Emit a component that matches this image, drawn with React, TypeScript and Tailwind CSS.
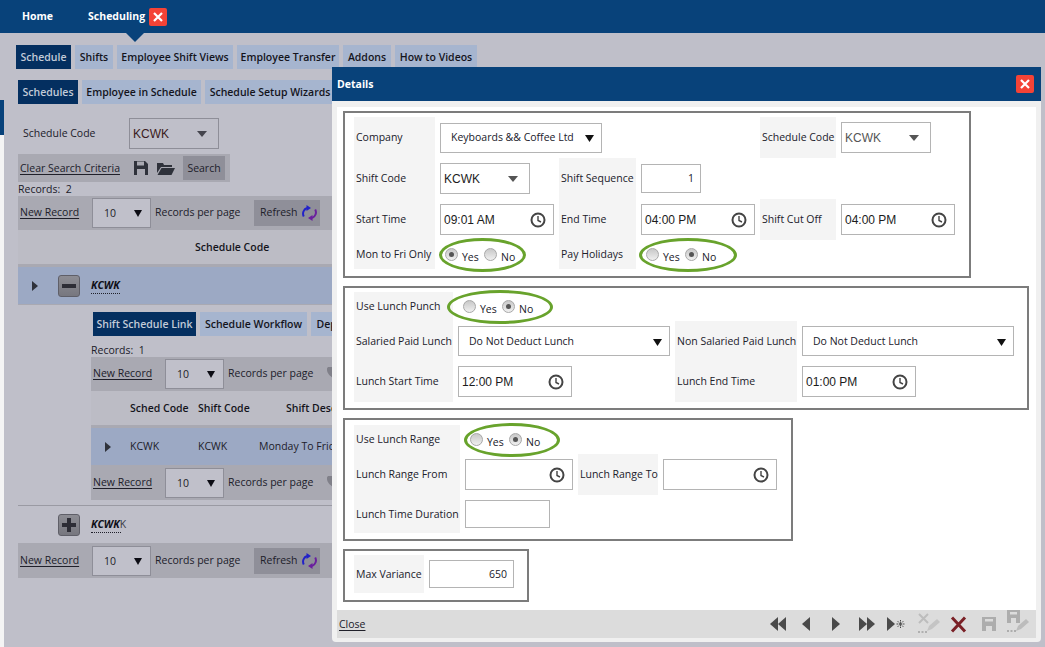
import type { ReactNode } from "react";

const labelFont = "font-['Open_Sans',sans-serif]";
const valueFont = "font-['Liberation_Sans',sans-serif]";

function Tab({ label, active, w }: { label: string; active?: boolean; w: string }) {
  return (
    <div
      className={`${w} h-6 shrink-0 flex items-center justify-center pt-[1px] whitespace-nowrap text-[10.5px] font-semibold ${
        active ? "bg-[#042f60] text-[#c3cbd8]" : "bg-[#a6b5cf] text-[#14141c]"
      }`}
    >
      {label}
    </div>
  );
}

function PageSelect({ value }: { value: string }) {
  return (
    <div className="w-[59px] h-[30px] shrink-0 bg-[#c0c0ca] border border-[#8e8e98] flex items-center justify-between pl-[11px] pr-[8px] text-[10.5px] text-[#1c1c26]">
      <span className="mt-[1px]">{value}</span>
      <svg width="8" height="8" viewBox="0 0 8 8">
        <path d="M0 1h8L4 8z" fill="#0c0c14" />
      </svg>
    </div>
  );
}

function RefreshIcon() {
  return (
    <svg className="shrink-0" width="15" height="16" viewBox="0 0 15 16" fill="none">
      <path d="M1.800 11.500A6 6 0 0 1 5 3" stroke="#2222c8" strokeWidth="2" />
      <path d="M4.500 0 9 3 4.500 6z" fill="#2222c8" />
      <path d="M13.200 4.500A6 6 0 0 1 10 13" stroke="#6a1f9e" strokeWidth="2" />
      <path d="M10.500 16 6 13 10.500 10z" fill="#6a1f9e" />
    </svg>
  );
}

function RecordBar({ refresh, className }: { refresh?: boolean; className: string }) {
  return (
    <div className={`h-[34px] bg-[#a9a9b2] flex items-center text-[10.5px] text-[#20202a] ${className}`}>
      <span className="ml-[2px] -mt-[1px] underline underline-offset-2 w-[59px] whitespace-nowrap">New Record</span>
      <span className="w-[13px]" />
      <PageSelect value="10" />
      <span className="ml-[4px] -mt-[1px] w-[84px] whitespace-nowrap">Records per page</span>
      {refresh ? (
        <div className="ml-[15px] w-[66px] h-[26px] shrink-0 bg-[#8f8f99] flex items-center pl-[6px] gap-[4px]">
          <span>Refresh</span>
          <RefreshIcon />
        </div>
      ) : (
        <svg className="ml-[15px] -mt-[2px]" width="12" height="12" viewBox="0 0 12 12">
          <path d="M0 3a3 3 0 0 1 6-1 3 3 0 0 1 6 1c0 3-3 6-6 8-3-2-6-5-6-8z" fill="#808089" />
        </svg>
      )}
    </div>
  );
}

function ExpandButton({ plus }: { plus?: boolean }) {
  return (
    <div className="w-[22px] h-[22px] shrink-0 rounded-[3px] border border-[#5f5f68] bg-gradient-to-b from-[#8d8d94] to-[#77777f] flex items-center justify-center">
      <svg width="14" height="14" viewBox="0 0 14 14">
        {plus && <rect x="5" y="0" width="4" height="14" fill="#2d2d36" />}
        <rect x="0" y="5" width="14" height="4" fill="#2d2d36" />
      </svg>
    </div>
  );
}

function Background() {
  return (
    <div className={`${labelFont} flex flex-col h-[647px]`}>
      <div className="h-[33px] shrink-0 bg-[#08427a] flex items-center text-white text-[10.5px] font-bold relative">
        <span className="ml-[22px]">Home</span>
        <span className="ml-[35px] w-[55px] whitespace-nowrap">Scheduling</span>
        <CloseButton className="ml-[6px]" />
        <span className="absolute left-[126px] top-[33px] border-x-[9px] border-x-transparent border-t-[9px] border-t-[#08427a]" />
      </div>
      <div className="flex flex-1 min-h-0">
        <div className="w-[4px] shrink-0 flex flex-col bg-[#f4f4f4]">
          <div className="h-[67px] bg-[#bfbfc9]" />
          <div className="h-[35px] bg-[#08427a]" />
        </div>
        <div className="flex-1 min-w-0 bg-[#bfbfc9] flex flex-col pr-[20px]">
          <div className="flex gap-[4px] mt-[12px] ml-[12px]">
            <Tab label="Schedule" active w="w-[55px]" />
            <Tab label="Shifts" w="w-[38px]" />
            <Tab label="Employee Shift Views" w="w-[116px]" />
            <Tab label="Employee Transfer" w="w-[102px]" />
            <Tab label="Addons" w="w-[48px]" />
            <Tab label="How to Videos" w="w-[82px]" />
          </div>
          <div className="flex gap-[4px] mt-[11px] ml-[14px]">
            <Tab label="Schedules" active w="w-[60px]" />
            <Tab label="Employee in Schedule" w="w-[119px]" />
            <Tab label="Schedule Setup Wizards" w="w-[130px]" />
          </div>
          <div className="flex items-center h-[31px] mt-[14px] text-[10.5px] text-[#20202a]">
            <span className="ml-[19px] w-[106px]">Schedule Code</span>
            <div className={`${valueFont} w-[90px] h-[31px] border border-[#8e8e98] flex items-center justify-between pl-[3px] pr-[11px] text-[12px] text-[#3a1a20]`}>
              KCWK
              <svg width="10" height="6" viewBox="0 0 10 6">
                <path d="M0 0h10L5 6z" fill="#45454e" />
              </svg>
            </div>
          </div>
          <div className="w-[212px] h-[28px] mt-[5px] ml-[14px] bg-[#a9a9b2] flex items-center text-[10.5px] text-[#20202a]">
            <span className="ml-[2px] mt-[1px] w-[99px] underline underline-offset-2 whitespace-nowrap">Clear Search Criteria</span>
            <svg className="ml-[15px]" width="14" height="14" viewBox="0 0 14 14">
              <path d="M0 0h11l3 3v11H0z" fill="#2f323b" />
              <rect x="3" y="0.5" width="7" height="4" fill="#a9a9b2" />
              <rect x="3" y="8" width="8" height="6" fill="#a9a9b2" />
            </svg>
            <svg className="ml-[9px]" width="18" height="13" viewBox="0 0 18 13">
              <path d="M0 1h6l1 2h8v2H4L0 11z" fill="#2f323b" />
              <path d="M4.500 6H18l-3.500 7H0.500z" fill="#2f323b" />
            </svg>
            <div className="ml-[8px] w-[42px] h-[24px] pt-[1px] bg-[#8f8f99] flex items-center justify-center">Search</div>
          </div>
          <div className="h-[14px] ml-[14px] text-[10.5px] leading-[14px] text-[#20202a]">Records:&nbsp; 2</div>
          <RecordBar refresh className="ml-[14px] mr-0" />
          <div className="h-[37px] ml-[14px] pt-[1px] bg-[#bcbcc5] border-b-[3px] border-[#a9a9b2] flex items-center text-[10.5px] font-semibold text-[#14141c]">
            <span className="ml-[177px]">Schedule Code</span>
          </div>
          <div className="h-[38px] ml-[14px] bg-[#9ca9c4] border-b border-[#a9a9b2] flex items-center">
            <svg className="ml-[14px]" width="6" height="10" viewBox="0 0 6 10">
              <path d="M0 0l6 5-6 5z" fill="#2f323b" />
            </svg>
            <span className="w-[20px]" />
            <ExpandButton />
            <span className="ml-[11px] mt-[1px] text-[10.5px] font-bold italic text-[#101018] border-b border-dotted border-[#20202a]">KCWK</span>
          </div>
          <div className="flex gap-[4px] mt-[7px] ml-[89px]">
            <Tab label="Shift Schedule Link" active w="w-[103px]" />
            <Tab label="Schedule Workflow" w="w-[107px]" />
            <Tab label="Departments" w="w-[78px]" />
          </div>
          <div className="h-[14px] mt-[7px] ml-[87px] text-[10.5px] leading-[14px] text-[#20202a]">Records:&nbsp; 1</div>
          <RecordBar className="ml-[87px]" />
          <div className="h-[37px] ml-[87px] pt-[1px] bg-[#bcbcc5] border-b-[3px] border-[#a9a9b2] flex items-center text-[10.5px] font-semibold text-[#14141c] whitespace-nowrap">
            <span className="ml-[39px] w-[68px]">Sched Code</span>
            <span className="w-[88px]">Shift Code</span>
            <span>Shift Description</span>
          </div>
          <div className="h-[38px] ml-[87px] bg-[#9ca9c4] border-b border-[#a9a9b2] flex items-center text-[10.5px] text-[#20202a] whitespace-nowrap">
            <svg className="ml-[14px]" width="6" height="10" viewBox="0 0 6 10">
              <path d="M0 0l6 5-6 5z" fill="#2f323b" />
            </svg>
            <span className="ml-[19px] w-[68px]">KCWK</span>
            <span className="w-[61px]">KCWK</span>
            <span>Monday To Friday</span>
          </div>
          <RecordBar className="ml-[87px]" />
          <div className="h-[6px] ml-[14px] border-b border-[#9a9aa3]" />
          <div className="h-[37px] ml-[14px] flex items-center">
            <span className="w-[40px]" />
            <ExpandButton plus />
            <span className="ml-[11px] text-[10.5px] text-[#3a3a44] border-b border-dotted border-[#20202a] leading-[16px] w-[30px] whitespace-nowrap">
              <b className="italic text-[#101018]">KCWK</b>K
            </span>
          </div>
          <RecordBar refresh className="ml-[14px] h-[35px] pt-[1px]" />
        </div>
      </div>
    </div>
  );
}

function CloseButton({ className }: { className?: string }) {
  return (
    <div className={`w-[18px] h-[18px] shrink-0 bg-[#f44336] rounded-[2px] flex items-center justify-center ${className ?? ""}`}>
      <svg width="10" height="10" viewBox="0 0 10 10">
        <path d="M1 1l8 8M9 1l-8 8" stroke="#fff" strokeWidth="2.200" />
      </svg>
    </div>
  );
}

function Label({ children, className }: { children?: ReactNode; className?: string }) {
  return (
    <div className={`bg-[#f4f4f4] flex items-center pl-[2px] text-[10.5px] text-[#20202a] whitespace-nowrap ${className ?? ""}`}>
      {children}
    </div>
  );
}

function ClockIcon() {
  return (
    <svg width="16" height="16" viewBox="0 0 16 16" fill="none">
      <circle cx="8" cy="8" r="6.500" stroke="#444" strokeWidth="2" />
      <path d="M8 4v4.500l3 1.500" stroke="#444" strokeWidth="1.400" />
    </svg>
  );
}

function TimeBox({ value, w = "w-[114px]" }: { value?: string; w?: string }) {
  return (
    <div className={`${valueFont} ${w} h-[31px] bg-white border border-[#b4b4b4] flex items-center justify-between pl-[3px] pr-[7px] text-[12px] text-[#1c1c1c]`}>
      <span>{value}</span>
      <ClockIcon />
    </div>
  );
}

function Select({ value, w, className }: { value: string; w: string; className?: string }) {
  return (
    <div className={`${w} h-[30px] bg-white border border-[#b4b4b4] flex items-center justify-between pl-[10px] pr-[7px] text-[10.5px] text-[#20202a] whitespace-nowrap ${className ?? ""}`}>
      <span>{value}</span>
      <svg width="9" height="8" viewBox="0 0 9 8">
        <path d="M0 1h9L4.500 8z" fill="#111" />
      </svg>
    </div>
  );
}

function CodeSelect({ color }: { color: string }) {
  return (
    <div className={`${valueFont} ${color} w-[90px] h-[31px] bg-white border border-[#b4b4b4] flex items-center justify-between pl-[3px] pr-[11px] text-[12px]`}>
      KCWK
      <svg width="10" height="6" viewBox="0 0 10 6">
        <path d="M0 0h10L5 6z" fill="#555" />
      </svg>
    </div>
  );
}

function Radio({ on }: { on?: boolean }) {
  return (
    <span className="w-[13px] h-[13px] shrink-0 rounded-full border border-[#a8a8a8] bg-gradient-to-b from-[#c8c8c8] to-[#f0f0f0] flex items-center justify-center">
      {on && <span className="w-[5px] h-[5px] rounded-full bg-[#555]" />}
    </span>
  );
}

function YesNo({ yes, className }: { yes?: boolean; className: string }) {
  return (
    <div className={`border-[3px] border-[#68a32c] rounded-[50%] flex items-center h-[34px] text-[10.5px] text-[#20202a] ${className}`}>
      <Radio on={yes} />
      <span className="ml-[4px] mt-[6px] w-[22px]">Yes</span>
      <Radio on={!yes} />
      <span className="ml-[4px] mt-[6px]">No</span>
    </div>
  );
}

function Cell({ children, className }: { children?: ReactNode; className?: string }) {
  return <div className={`flex items-center pl-[5px] ${className ?? ""}`}>{children}</div>;
}

function NumberBox({ value, w, h }: { value?: string; w: string; h: string }) {
  return (
    <div className={`${w} ${h} bg-white border border-[#b4b4b4] flex items-center justify-end pr-[6px] pt-[1px] text-[10.5px] text-[#20202a]`}>
      {value}
    </div>
  );
}

function NavArrow({ dir, double }: { dir: "l" | "r"; double?: boolean }) {
  const shape = dir === "l" ? "M8 0v14L0 7z" : "M0 0v14l8-7z";
  return (
    <svg width={double ? 16 : 9} height="14" viewBox={double ? "0 0 16 14" : "0 0 9 14"}>
      <path d={shape} fill="#4a4a4a" />
      {double && <path d={shape} transform="translate(8 0)" fill="#4a4a4a" />}
    </svg>
  );
}

function FooterIcons() {
  return (
    <div className="ml-auto flex items-center">
      <NavArrow dir="l" double />
      <span className="w-[16px]" />
      <NavArrow dir="l" />
      <span className="w-[21px]" />
      <NavArrow dir="r" />
      <span className="w-[18px]" />
      <NavArrow dir="r" double />
      <span className="w-[12px]" />
      <svg width="19" height="14" viewBox="0 0 19 14">
        <path d="M0 0v14l8-7z" fill="#4a4a4a" />
        <path d="M13.500 3v8M9.500 7h8M10.700 4.200l5.600 5.600M16.300 4.200l-5.600 5.600" stroke="#444" strokeWidth="1" strokeDasharray="1.500 0.700" />
      </svg>
      <span className="w-[12px]" />
      <svg width="23" height="22" viewBox="0 0 23 22" fill="none">
        <path d="M1 1l9 9M10 1l-9 9" stroke="#bdbdbd" strokeWidth="2" />
        <path d="M9 18l2-5 8-7 3 3-8 7z" fill="#c4c4c4" />
        <path d="M0 19h2M3.500 19h2M7 19h2" stroke="#b0b0b0" strokeWidth="2" />
      </svg>
      <span className="w-[9px]" />
      <svg width="17" height="17" viewBox="0 0 17 17" fill="none">
        <path d="M2 1.500l13 14M15 1.500l-13 14" stroke="#7a2026" strokeWidth="3" />
      </svg>
      <span className="w-[15px]" />
      <svg width="14" height="14" viewBox="0 0 14 14">
        <path d="M0 0h14v14H0z" fill="#adadad" />
        <rect x="3" y="2" width="8" height="2.500" fill="#dcdcdc" />
        <rect x="4" y="9" width="6" height="5" fill="#dcdcdc" />
      </svg>
      <span className="w-[10px]" />
      <svg className="-mt-[4px]" width="24" height="24" viewBox="0 0 24 24">
        <path d="M1 0h13v13H1z" fill="#adadad" />
        <rect x="4" y="2" width="7" height="2.500" fill="#dcdcdc" />
        <rect x="5" y="8" width="5" height="5" fill="#dcdcdc" />
        <path d="M10 21l2-5 8-7 3 3-8 7z" fill="#bcbcbc" />
        <path d="M1 21h2M4.500 21h2M8 21h2" stroke="#adadad" strokeWidth="2" />
      </svg>
    </div>
  );
}

function Modal() {
  return (
    <div className={`${labelFont} absolute left-[332px] top-[67px] w-[709px] h-[575px] bg-[#f0f0f0] rounded-b-[4px] flex flex-col`}>
      <div className="h-[34px] shrink-0 pt-[1px] bg-[#08427a] flex items-center justify-between pl-[5px] pr-[7px]">
        <span className="text-[10.5px] font-bold text-white">Details</span>
        <CloseButton className="-mt-[1px]" />
      </div>
      <div className="h-[531px] mt-[6px] mx-[5px] bg-white flex flex-col shrink-0">
        <div className="flex-1 pl-[6px] pt-[4px] flex flex-col gap-[8px]">
          {/* Company and shift */}
          <div className="w-[628px] h-[167px] border-2 border-[#7c7c7c] pl-[9px] pt-[4px] grid grid-cols-[81px_124px_77px_124px_76px_120px] grid-rows-[41px_41px_41px_29px]">
            <Label>Company</Label>
            <Cell className="col-span-3">
              <Select value="Keyboards && Coffee Ltd" w="w-[162px]" />
            </Cell>
            <Label>Schedule Code</Label>
            <Cell>
              <CodeSelect color="text-[#555]" />
            </Cell>

            <Label>Shift Code</Label>
            <Cell>
              <CodeSelect color="text-[#1c1c1c]" />
            </Cell>
            <Label>Shift Sequence</Label>
            <Cell>
              <NumberBox value="1" w="w-[60px]" h="h-[29px]" />
            </Cell>
            <div />
            <div />

            <Label>Start Time</Label>
            <Cell>
              <TimeBox value="09:01 AM" />
            </Cell>
            <Label>End Time</Label>
            <Cell>
              <TimeBox value="04:00 PM" />
            </Cell>
            <Label>Shift Cut Off</Label>
            <Cell>
              <TimeBox value="04:00 PM" />
            </Cell>

            <Label>Mon to Fri Only</Label>
            <Cell>
              <YesNo yes className="w-[87px] -ml-[1px] pl-[3px]" />
            </Cell>
            <Label>Pay Holidays</Label>
            <Cell>
              <YesNo className="w-[98px] -ml-[2px] pl-[4px]" />
            </Cell>
          </div>

          {/* Lunch punch */}
          <div className="w-[686px] h-[124px] border-2 border-[#7c7c7c] pl-[9px] pt-[4px] grid grid-cols-[99px_222px_122px_230px] grid-rows-[29px_40px_41px]">
            <Label>Use Lunch Punch</Label>
            <Cell>
              <YesNo className="w-[106px] -ml-[11px] pl-[13px]" />
            </Cell>
            <div />
            <div />
            <Label className="pt-[1px]">Salaried Paid Lunch</Label>
            <Cell>
              <Select value="Do Not Deduct Lunch" w="w-[212px]" className="pt-[1px]" />
            </Cell>
            <Label className="pt-[1px]">Non Salaried Paid Lunch</Label>
            <Cell>
              <Select value="Do Not Deduct Lunch" w="w-[212px]" className="pt-[1px]" />
            </Cell>
            <Label>Lunch Start Time</Label>
            <Cell>
              <TimeBox value="12:00 PM" />
            </Cell>
            <Label>Lunch End Time</Label>
            <Cell>
              <TimeBox value="01:00 PM" />
            </Cell>
          </div>

          {/* Lunch range */}
          <div className="w-[450px] h-[123px] border-2 border-[#7c7c7c] pl-[9px] pt-[5px] grid grid-cols-[106px_118px_80px_130px] grid-rows-[29px_41px_38px]">
            <Label>Use Lunch Range</Label>
            <Cell>
              <YesNo className="w-[96px] -ml-[1px] pl-[3px]" />
            </Cell>
            <div />
            <div />
            <Label>Lunch Range From</Label>
            <Cell>
              <TimeBox w="w-[108px]" />
            </Cell>
            <Label>Lunch Range To</Label>
            <Cell>
              <TimeBox />
            </Cell>
            <Label className="pt-[1px]">Lunch Time Duration</Label>
            <Cell>
              <NumberBox w="w-[85px]" h="h-[28px]" />
            </Cell>
          </div>

          {/* Variance */}
          <div className="w-[186px] h-[53px] border-2 border-[#7c7c7c] pl-[9px] pt-[4px] flex items-start">
            <Label className="w-[70px] h-[38px] pt-[1px]">Max Variance</Label>
            <Cell className="h-[38px]">
              <NumberBox value="650" w="w-[85px]" h="h-[28px]" />
            </Cell>
          </div>
        </div>
        <div className="h-[28px] shrink-0 bg-[#dcdcdc] flex items-center pl-[2px] pr-[6px] text-[10.5px] text-[#20202a]">
          <span className="mt-[1px] underline underline-offset-2">Close</span>
          <FooterIcons />
        </div>
      </div>
    </div>
  );
}

export default function App() {
  return (
    <div className="relative w-[1045px] h-[647px] overflow-hidden bg-[#bfbfc9]">
      <Background />
      <Modal />
    </div>
  );
}
